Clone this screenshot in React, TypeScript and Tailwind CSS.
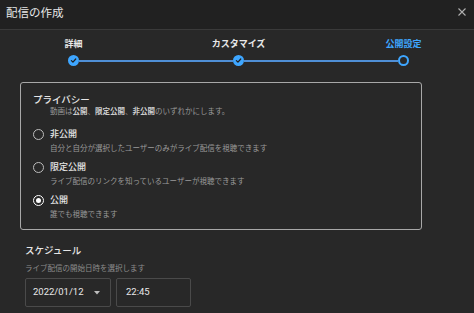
import React from "react";

const font = { fontFamily: '"Noto Sans CJK JP", "Noto Sans", Roboto, sans-serif' };

function Radio({ checked }: { checked?: boolean }) {
  return (
    <div
      className={
        "w-[11px] h-[11px] rounded-full border-[1.5px] flex items-center justify-center shrink-0 " +
        (checked ? "border-white" : "border-[#bdbdbd]")
      }
    >
      {checked && <div className="w-[5px] h-[5px] rounded-full bg-white" />}
    </div>
  );
}

function Option({ label, desc, checked, first }: { label: string; desc: string; checked?: boolean; first?: boolean }) {
  return (
    <div className={first ? "mt-[10px]" : "mt-[6px]"}>
      <div className="flex items-center h-[14px]">
        <div className="w-[17px] flex items-center">
          <Radio checked={checked} />
        </div>
        <span className="text-[9px] leading-[14px] text-[#e6e6e6] font-medium">{label}</span>
      </div>
      <div className="pl-[17px] mt-[1px] text-[7.5px] leading-[12px] text-[#9a9a9a]">{desc}</div>
    </div>
  );
}

function Step({ label, state }: { label: string; state: "done" | "current" }) {
  return (
    <div className="w-[11px] flex flex-col items-center shrink-0">
      <div
        className={
          "whitespace-nowrap text-[9px] leading-[12px] font-bold " +
          (state === "current" ? "text-[#3ea6ff]" : "text-[#e8e8e8]")
        }
      >
        {label}
      </div>
      <div className="mt-[5px]">
        {state === "done" ? (
          <div className="w-[11px] h-[11px] rounded-full bg-[#3ea6ff] flex items-center justify-center">
            <svg width="7" height="7" viewBox="0 0 10 10">
              <path d="M2 5.2 L4.2 7.3 L8.2 2.8" fill="none" stroke="#1f1f1f" strokeWidth="1.8" strokeLinecap="round" strokeLinejoin="round" />
            </svg>
          </div>
        ) : (
          <div className="w-[11px] h-[11px] rounded-full border-[2px] border-[#3ea6ff] bg-[#282828]" />
        )}
      </div>
    </div>
  );
}

export default function App() {
  return (
    <div className="w-[474px] h-[313px] overflow-hidden bg-[#282828] text-white" style={font}>
      <div className="h-[30px] bg-[#212121] border-b border-[#3a3a3a] flex items-center justify-between pl-[6px] pr-[7px]">
        <span className="text-[11.5px] leading-[14px] text-[#e8e8e8] -mt-[5px]">配信の作成</span>
        <svg width="10" height="10" viewBox="0 0 10 10" className="-mt-[5px]">
          <path d="M1.5 1.5 L8.5 8.5 M8.5 1.5 L1.5 8.5" stroke="#b0b0b0" strokeWidth="1.1" />
        </svg>
      </div>

      <div className="pt-[8px] pl-[68px] w-[409px] flex items-end">
        <Step label="詳細" state="done" />
        <div className="flex-1 h-[2px] bg-[#4f8fd6] mb-[4.5px]" />
        <Step label="カスタマイズ" state="done" />
        <div className="flex-1 h-[2px] bg-[#4f8fd6] mb-[4.5px]" />
        <Step label="公開設定" state="current" />
      </div>

      <div className="mt-[16px] ml-[20px] w-[402px] border border-[#a8a8a8] rounded-[3px] pt-[10px] pb-[9px] pl-[12px]">
        <div className="text-[9.5px] leading-[12px] text-[#e6e6e6] font-medium">プライバシー</div>
        <div className="pl-[17px] text-[7.5px] leading-[12px] text-[#9a9a9a]">
          動画は<span className="font-bold text-[#cfcfcf]">公開</span>、<span className="font-bold text-[#cfcfcf]">限定公開</span>、<span className="font-bold text-[#cfcfcf]">非公開</span>のいずれかにします。
        </div>
        <Option first label="非公開" desc="自分と自分が選択したユーザーのみがライブ配信を視聴できます" />
        <Option label="限定公開" desc="ライブ配信のリンクを知っているユーザーが視聴できます" />
        <Option checked label="公開" desc="誰でも視聴できます" />
      </div>

      <div className="pl-[25px]">
        <div className="mt-[14px] text-[9.5px] leading-[12px] text-[#e6e6e6] font-medium">スケジュール</div>
        <div className="mt-[6px] text-[7.5px] leading-[12px] text-[#8c8c8c]">ライブ配信の開始日時を選択します</div>
        <div className="mt-[4px] flex gap-[5px]">
          <div className="w-[86px] h-[29px] border border-[#4a4a4a] rounded-[2px] flex items-center pl-[7px] pr-[10px] justify-between">
            <span className="text-[9.5px] text-[#e8e8e8]" style={{ fontFamily: "Roboto, sans-serif" }}>2022/01/12</span>
            <svg width="6" height="4" viewBox="0 0 6 4">
              <path d="M0 0 L6 0 L3 3.5 Z" fill="#bdbdbd" />
            </svg>
          </div>
          <div className="w-[75px] h-[29px] border border-[#4a4a4a] rounded-[2px] flex items-center pl-[9px]">
            <span className="text-[9.5px] text-[#e8e8e8]" style={{ fontFamily: "Roboto, sans-serif" }}>22:45</span>
          </div>
        </div>
      </div>
    </div>
  );
}
